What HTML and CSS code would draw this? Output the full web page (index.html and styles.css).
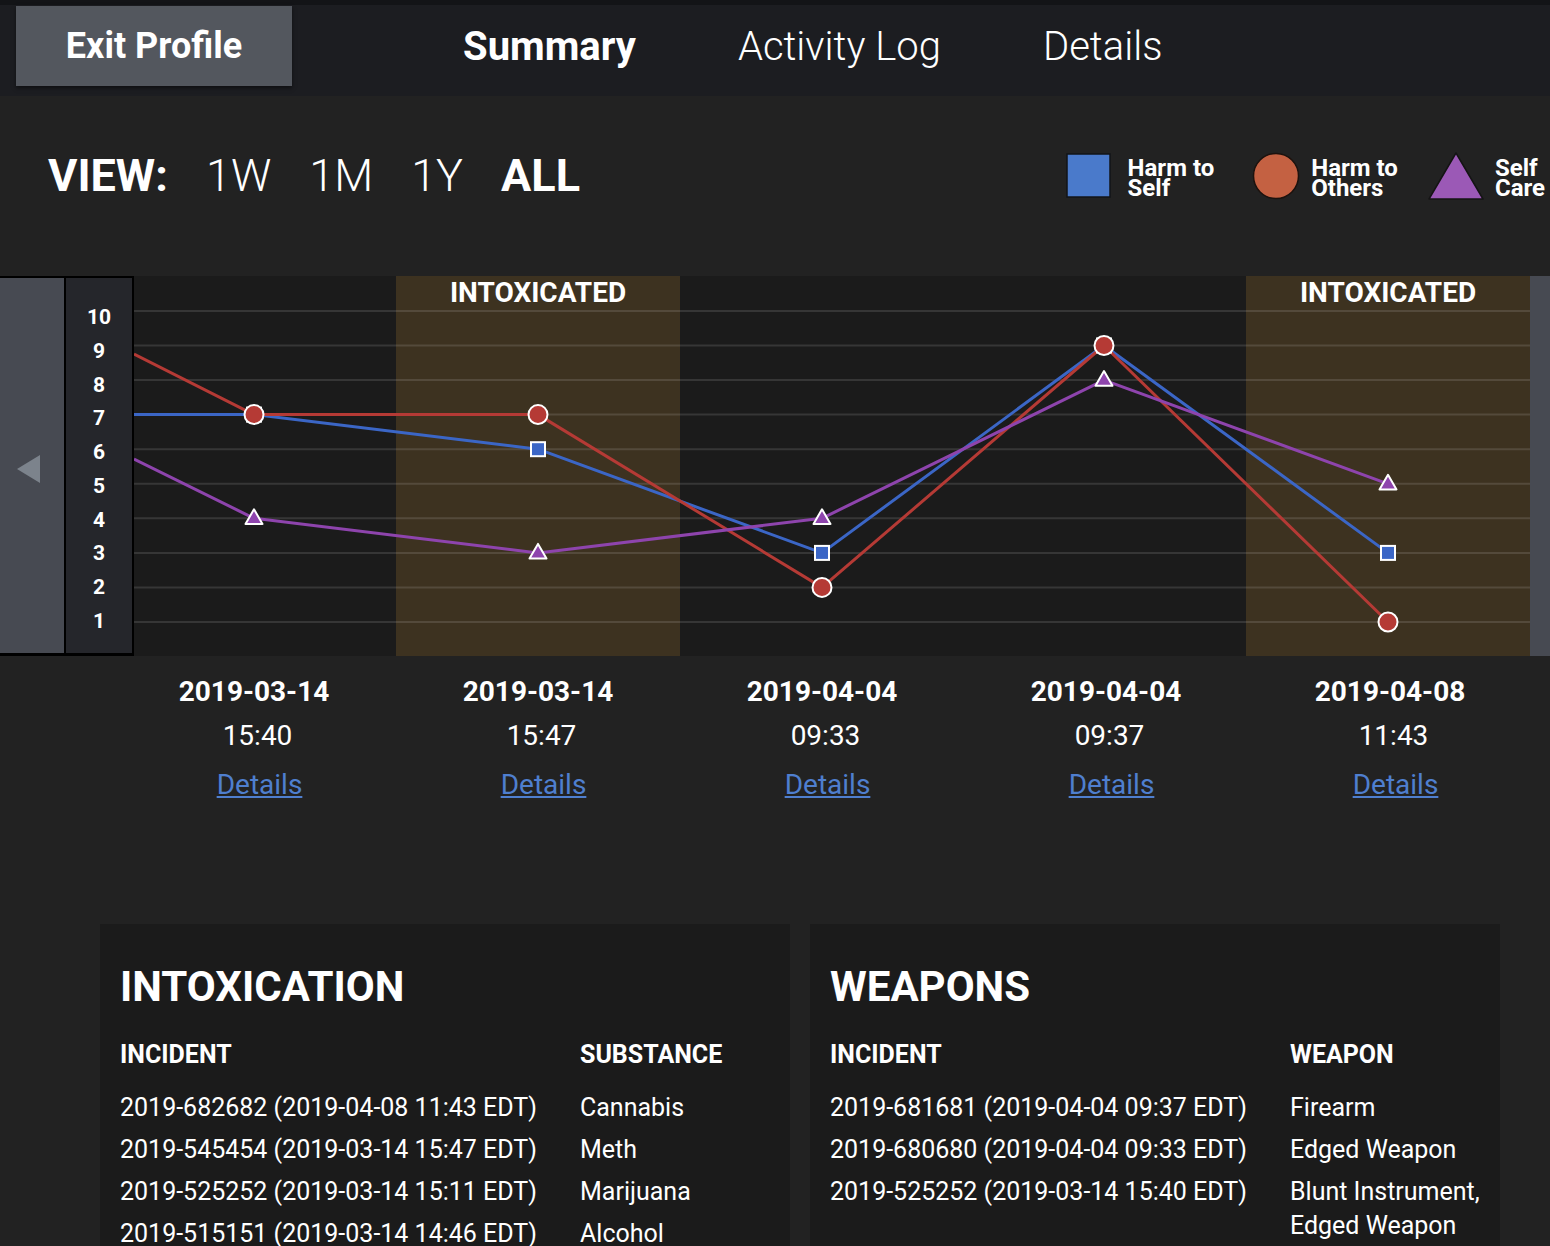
FILE: index.html
```html
<!DOCTYPE html>
<html lang="en">
<head>
<meta charset="utf-8">
<title>Profile Summary</title>
<link rel="stylesheet" href="styles.css">
</head>
<body>
<header class="nav">
  <button class="exit-btn">Exit Profile</button>
  <nav class="tabs">
    <a class="tab active">Summary</a>
    <a class="tab">Activity Log</a>
    <a class="tab">Details</a>
  </nav>
</header>

<section class="viewbar">
  <div class="view">
    <span class="view-label">VIEW:</span>
    <span class="range">1W</span>
    <span class="range">1M</span>
    <span class="range">1Y</span>
    <span class="range active">ALL</span>
  </div>
  <div class="legend">
    <div class="legend-item item-self">
      <svg class="legend-icon icon-square" width="46" height="46" viewBox="0 0 46 46"><rect x="1" y="1" width="43" height="43" fill="#4a7acb" stroke="#121418" stroke-width="1.5"/></svg>
      <span class="legend-text">Harm to<br>Self</span>
    </div>
    <div class="legend-item item-others">
      <svg class="legend-icon" width="48" height="48" viewBox="0 0 48 48"><circle cx="24" cy="24" r="22.5" fill="#c46142" stroke="#1c120e" stroke-width="1.5"/></svg>
      <span class="legend-text">Harm to<br>Others</span>
    </div>
    <div class="legend-item item-care">
      <svg class="legend-icon" width="56" height="48" viewBox="0 0 56 48"><polygon points="28,1 55,47 1,47" fill="#9b59b6" stroke="#141414" stroke-width="1.5" stroke-linejoin="round"/></svg>
      <span class="legend-text">Self<br>Care</span>
    </div>
  </div>
</section>

<section class="chart">
  <div class="chart-left">
    <div class="pager">
      <svg width="24" height="28" viewBox="0 0 24 28"><polygon points="23,0 23,28 0,14" fill="#7c838c"/></svg>
    </div>
    <div class="y-axis">
      <span>10</span><span>9</span><span>8</span><span>7</span><span>6</span><span>5</span><span>4</span><span>3</span><span>2</span><span>1</span>
    </div>
  </div>
  <svg class="plot" width="1396" height="380" viewBox="0 0 1396 380">
    <rect x="0" y="0" width="1396" height="380" fill="#1b1b1b"/>
    <rect x="262" y="0" width="284" height="380" fill="#3d3220"/>
    <rect x="1112" y="0" width="284" height="380" fill="#3d3220"/>
    <g stroke="rgba(255,255,255,0.12)" stroke-width="2">
      <line x1="0" x2="1396" y1="35" y2="35"/>
      <line x1="0" x2="1396" y1="69.5" y2="69.5"/>
      <line x1="0" x2="1396" y1="104.1" y2="104.1"/>
      <line x1="0" x2="1396" y1="138.6" y2="138.6"/>
      <line x1="0" x2="1396" y1="173.2" y2="173.2"/>
      <line x1="0" x2="1396" y1="207.8" y2="207.8"/>
      <line x1="0" x2="1396" y1="242.3" y2="242.3"/>
      <line x1="0" x2="1396" y1="276.9" y2="276.9"/>
      <line x1="0" x2="1396" y1="311.4" y2="311.4"/>
      <line x1="0" x2="1396" y1="346" y2="346"/>
    </g>
    <text class="band-label" x="404" y="26" text-anchor="middle">INTOXICATED</text>
    <text class="band-label" x="1254" y="26" text-anchor="middle">INTOXICATED</text>
    <g fill="none" stroke-width="3" stroke-linejoin="round">
      <polyline stroke="#3b66c6" points="0,138.6 120,138.6 404,173.2 688,276.9 970,69.5 1254,276.9"/>
      <polyline stroke="#b53a35" points="0,78 120,138.6 404,138.6 688,311.4 970,69.5 1254,346"/>
      <polyline stroke="#8e44ad" points="0,183 120,242.3 404,276.9 688,242.3 970,104.1 1254,207.8"/>
    </g>
    <g fill="#3b66c6" stroke="#fff" stroke-width="2">
      <rect x="113" y="131.6" width="14" height="14"/>
      <rect x="397" y="166.2" width="14" height="14"/>
      <rect x="681" y="269.9" width="14" height="14"/>
      <rect x="963" y="62.5" width="14" height="14"/>
      <rect x="1247" y="269.9" width="14" height="14"/>
    </g>
    <g fill="#8e44ad" stroke="#fff" stroke-width="2" stroke-linejoin="round">
      <polygon points="120,233.3 128.5,248 111.5,248"/>
      <polygon points="404,267.9 412.5,282.6 395.5,282.6"/>
      <polygon points="688,233.3 696.5,248 679.5,248"/>
      <polygon points="970,95.1 978.5,109.8 961.5,109.8"/>
      <polygon points="1254,198.8 1262.5,213.5 1245.5,213.5"/>
    </g>
    <g fill="#b53a35" stroke="#fff" stroke-width="2">
      <circle cx="120" cy="138.6" r="9.5"/>
      <circle cx="404" cy="138.6" r="9.5"/>
      <circle cx="688" cy="311.4" r="9.5"/>
      <circle cx="970" cy="69.5" r="9.5"/>
      <circle cx="1254" cy="346" r="9.5"/>
    </g>
  </svg>
  <div class="chart-right"></div>
</section>

<section class="x-labels">
  <div class="x-col"><div class="x-date">2019-03-14</div><div class="x-time">15:40</div><a class="x-link" href="#">Details</a></div>
  <div class="x-col"><div class="x-date">2019-03-14</div><div class="x-time">15:47</div><a class="x-link" href="#">Details</a></div>
  <div class="x-col"><div class="x-date">2019-04-04</div><div class="x-time">09:33</div><a class="x-link" href="#">Details</a></div>
  <div class="x-col"><div class="x-date">2019-04-04</div><div class="x-time">09:37</div><a class="x-link" href="#">Details</a></div>
  <div class="x-col"><div class="x-date">2019-04-08</div><div class="x-time">11:43</div><a class="x-link" href="#">Details</a></div>
</section>

<section class="cards">
  <div class="card">
    <h2 class="card-title">INTOXICATION</h2>
    <table class="card-table">
      <thead><tr><th>INCIDENT</th><th>SUBSTANCE</th></tr></thead>
      <tbody>
        <tr><td>2019-682682 (2019-04-08 11:43 EDT)</td><td>Cannabis</td></tr>
        <tr><td>2019-545454 (2019-03-14 15:47 EDT)</td><td>Meth</td></tr>
        <tr><td>2019-525252 (2019-03-14 15:11 EDT)</td><td>Marijuana</td></tr>
        <tr><td>2019-515151 (2019-03-14 14:46 EDT)</td><td>Alcohol</td></tr>
      </tbody>
    </table>
  </div>
  <div class="card">
    <h2 class="card-title">WEAPONS</h2>
    <table class="card-table">
      <thead><tr><th>INCIDENT</th><th>WEAPON</th></tr></thead>
      <tbody>
        <tr><td>2019-681681 (2019-04-04 09:37 EDT)</td><td>Firearm</td></tr>
        <tr><td>2019-680680 (2019-04-04 09:33 EDT)</td><td>Edged Weapon</td></tr>
        <tr><td>2019-525252 (2019-03-14 15:40 EDT)</td><td>Blunt Instrument,<br>Edged Weapon</td></tr>
      </tbody>
    </table>
  </div>
</section>
</body>
</html>
```

FILE: styles.css
```css
* { box-sizing: border-box; }

html, body {
  margin: 0;
  padding: 0;
  background: #222222;
  color: #ffffff;
  font-family: Roboto, "Liberation Sans", sans-serif;
}

/* ---------- top navigation ---------- */
.nav {
  display: flex;
  align-items: center;
  height: 96px;
  padding: 1px 16px 10px 16px;
  background: #1c1d21;
  border-top: 5px solid #131417;
}

.exit-btn {
  width: 276px;
  height: 80px;
  border: none;
  background: #53575e;
  color: #fff;
  font-family: Roboto, "Liberation Sans", sans-serif;
  font-weight: 700;
  font-size: 36px;
  box-shadow: 0 2px 4px rgba(0, 0, 0, 0.5);
  padding: 0;
}

.tabs {
  display: flex;
  align-items: center;
  gap: 102px;
  margin-left: 171px;
}

.tab {
  font-size: 40px;
  font-weight: 300;
  color: #fff;
  text-decoration: none;
}

.tab.active { font-weight: 700; }

/* ---------- view bar ---------- */
.viewbar {
  display: flex;
  align-items: center;
  justify-content: space-between;
  height: 158px;
  padding: 0 5px 0 48px;
}

.view {
  display: flex;
  align-items: center;
  gap: 38px;
  font-size: 45px;
}

.view-label { font-weight: 700; }
.range { font-weight: 300; }
.range.active { font-weight: 700; }

.legend {
  display: flex;
  align-items: center;
  padding-top: 2px;
}

.legend-item {
  display: flex;
  align-items: center;
}

.item-others { margin-left: 38px; }
.item-care { margin-left: 30px; }

.legend-icon { display: block; margin-right: 11px; }
.legend-icon.icon-square { margin-right: 16px; }

.legend-text {
  font-size: 24px;
  font-weight: 700;
  line-height: 20px;
  padding-top: 4px;
}

/* ---------- chart ---------- */
.chart {
  display: flex;
  height: 380px;
  margin-top: 22px;
}

.chart-left {
  display: flex;
  border-top: 2px solid #000;
  border-bottom: 3px solid #000;
}

.pager {
  width: 64px;
  background: #474a52;
  display: flex;
  align-items: center;
  padding-left: 17px;
  padding-top: 6px;
}

.pager svg { display: block; }

.y-axis {
  width: 70px;
  background: #25262b;
  border-left: 2px solid #000;
  border-right: 2px solid #000;
  display: flex;
  flex-direction: column;
  justify-content: space-between;
  align-items: center;
  padding: 27px 0 20px 0;
  font-size: 21px;
  font-weight: 700;
  line-height: 24px;
}

.plot { display: block; flex: none; }

.band-label {
  fill: #fff;
  font-family: Roboto, "Liberation Sans", sans-serif;
  font-weight: 700;
  font-size: 28px;
}

.chart-right {
  flex: 1;
  background: #474a52;
}

/* ---------- x labels ---------- */
.x-labels {
  display: flex;
  padding-left: 112px;
  margin-top: 14px;
}

.x-col {
  width: 284px;
  display: flex;
  flex-direction: column;
  align-items: center;
  font-size: 28px;
  line-height: 44px;
}

.x-date { font-weight: 700; }
.x-time { font-weight: 400; margin-left: 7px; }

.x-link {
  color: #4f7fcf;
  text-decoration: underline;
  margin-top: 5px;
  margin-left: 11px;
}

/* ---------- cards ---------- */
.cards {
  display: grid;
  grid-template-columns: 690px 690px;
  gap: 20px;
  padding: 0 0 40px 100px;
  margin-top: 117px;
}

.card {
  background: #1b1b1b;
  padding: 39px 20px 30px 20px;
}

.card-title {
  margin: 0 0 27px 0;
  font-size: 42px;
  line-height: 48px;
  font-weight: 700;
}

.card-table {
  border-collapse: collapse;
  font-size: 25px;
}

.card-table th {
  width: 460px;
  text-align: left;
  font-weight: 700;
  line-height: 34px;
  padding: 0 0 15px 0;
}

.card-table th + th { width: auto; }

.card-table td {
  line-height: 34px;
  padding: 4px 0;
  vertical-align: top;
}
```
